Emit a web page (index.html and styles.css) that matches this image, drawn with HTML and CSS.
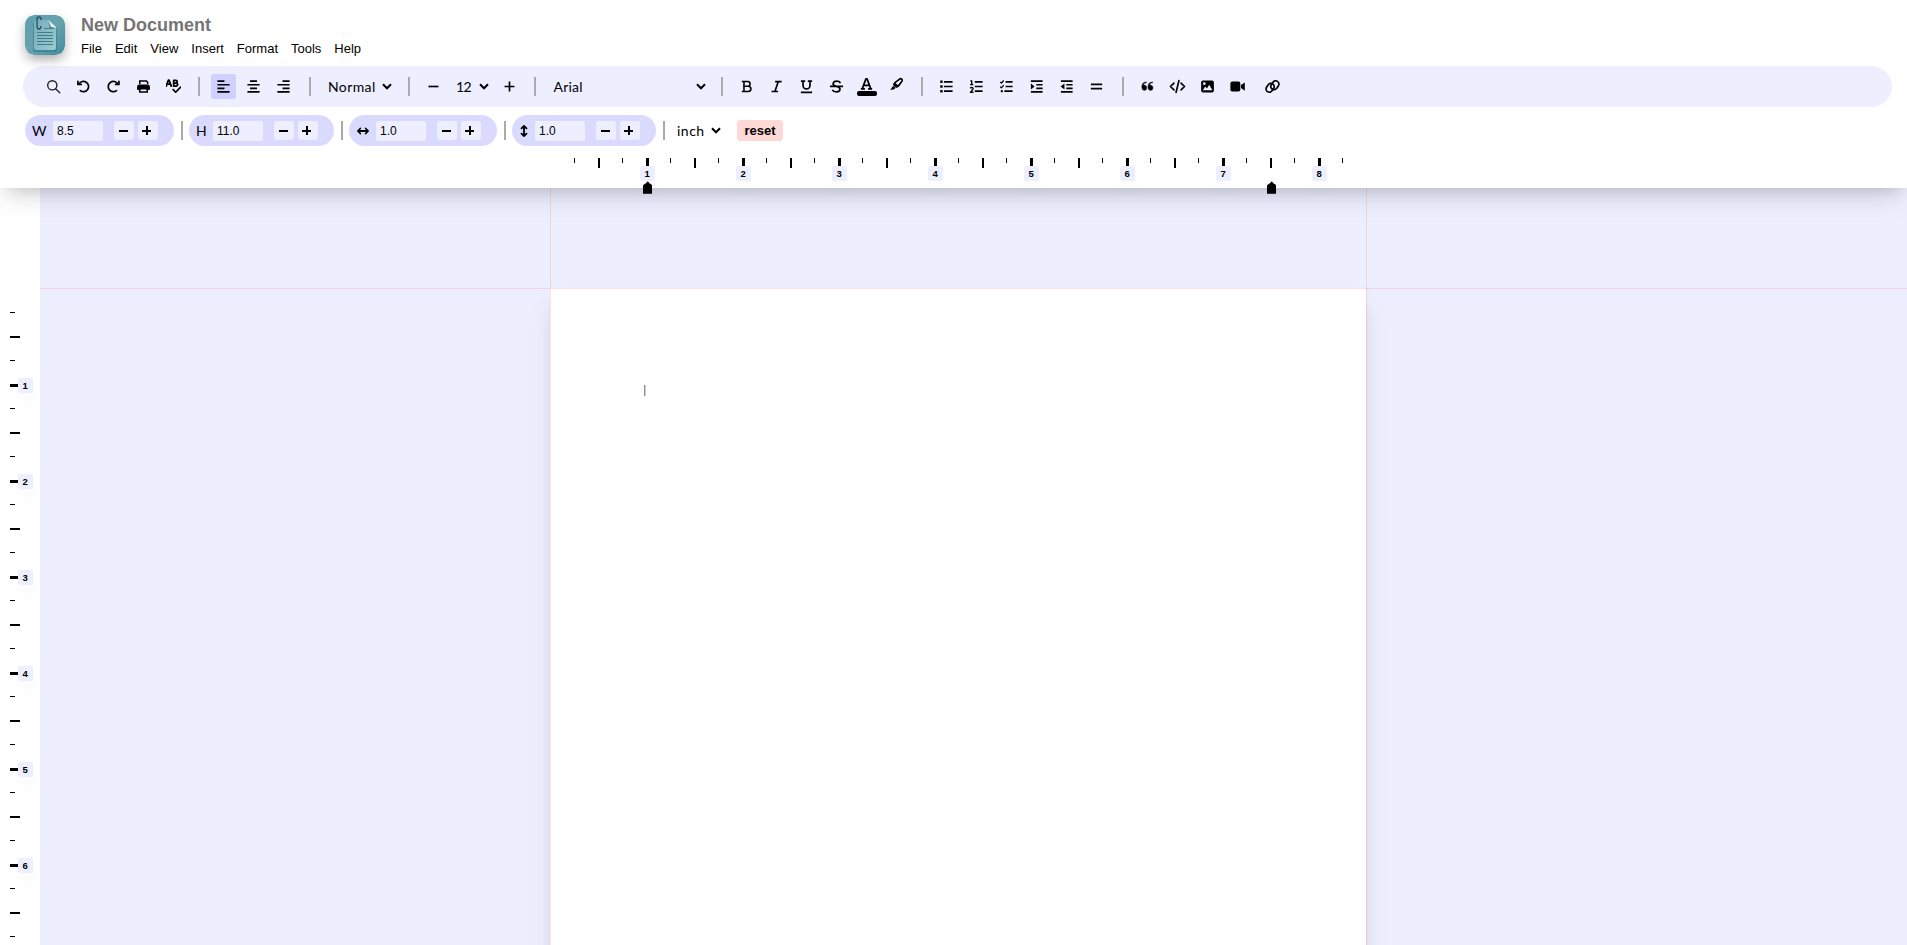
FILE: index.html
```html
<!DOCTYPE html>
<html lang="en">
<head>
<meta charset="utf-8">
<title>New Document</title>
<link rel="stylesheet" href="styles.css">
</head>
<body>
<header class="header">
  <div class="top">
    <svg class="logo" viewBox="0 0 40 40">
      <defs>
        <linearGradient id="tile" x1="0" y1="0" x2="1" y2="1"><stop offset="0" stop-color="#5f9fac"/><stop offset=".5" stop-color="#68a2ae"/><stop offset="1" stop-color="#438d9d"/></linearGradient>
        <linearGradient id="sheet" x1="0" y1="0" x2="1" y2="1"><stop offset="0" stop-color="#76adb8"/><stop offset="1" stop-color="#9acbd2"/></linearGradient>
      </defs>
      <rect width="40" height="40" rx="9" fill="url(#tile)"/>
      <path d="M10 7h15l7 7v21q0 2-2 2H10q-2 0-2-2V9q0-2 2-2z" fill="#33798a" opacity=".6"/>
      <path d="M11 5h13l7 7v21q0 2-2 2H11q-2 0-2-2V7q0-2 2-2z" fill="url(#sheet)"/>
      <path d="M23 5l8 7v1l-5-1z" fill="#e3f1f2"/><path d="M23 5l3 7 5 1-6 1z" fill="#4b8796"/>
      <path d="M19 13.500h9M12 17.500h16M12 20.500h16M12 23.500h16M12 26.500h16M12 29.500h16" stroke="#437d8d" stroke-width="1.200"/>
      <path d="M16 5V4q0-2-2-2t-2 2v7q0 3 2 3t2-3" fill="none" stroke="#294e68" stroke-width="1.300"/>
    </svg>
    <div class="heading">
      <h1 class="doc-title">New Document</h1>
      <nav class="menu"><span>File</span><span>Edit</span><span>View</span><span>Insert</span><span>Format</span><span>Tools</span><span>Help</span></nav>
    </div>
  </div>

  <div class="toolbar">
    <button class="tool"><svg viewBox="0 0 16 16" class="thin"><circle cx="6.700" cy="6.700" r="4.900"/><path d="M10.300 10.300l4.400 4.400"/></svg></button>
    <button class="tool"><svg viewBox="0 0 16 16" class="line"><path d="M3.200 5.200A5.500 5.500 0 1 1 4.600 12.400"/><path d="M2 2.400v3.400h3.600"/></svg></button>
    <button class="tool"><svg viewBox="0 0 16 16" class="line"><path d="M12.600 5.200A5.500 5.500 0 1 0 11.200 12.400"/><path d="M13.800 2.400v3.400h-3.600"/></svg></button>
    <button class="tool"><svg viewBox="0 0 16 16"><path d="M4 5.200V2.200h7.200l1.200 1.200v1.800" fill="none" stroke="#000" stroke-width="1.600"/><path d="M3.300 5.800h9.400q2 0 2 2V11.400h-2V9.600H3.300v1.800h-2V7.800q0-2 2-2z"/><path d="M1.300 8h13.400v3.400H1.300z"/><path d="M4 10.300h8v3.500H4z" fill="#edefff" stroke="#000" stroke-width="1.600"/></svg></button>
    <button class="tool"><svg viewBox="0 0 16 16" class="line"><path d="M.2 7.600l2.300-6.300h.8l2.300 6.300M1.200 5.500h3.400M8.200 1.500v6h2.500q1.800-.2 1.800-1.600T10.800 4.400H8.400h2q1.500-.1 1.500-1.500t-1.500-1.400z" stroke-width="1.900"/><path d="M7.600 11.200l2.700 2.900 5.300-5.500"/></svg></button>
    <i class="sep"></i>
    <button class="tool on"><svg viewBox="0 0 16 16" class="line flat"><path d="M1.500 2.200h7.500M1.500 6.100h13M1.500 9.900h7.500M1.500 13.800h13"/></svg></button>
    <button class="tool"><svg viewBox="0 0 16 16" class="line flat"><path d="M4.300 2.200h7.400M1.500 6.100h13M4.300 9.900h7.400M1.500 13.800h13"/></svg></button>
    <button class="tool"><svg viewBox="0 0 16 16" class="line flat"><path d="M7 2.200h7.500M1.500 6.100h13M7 9.900h7.500M1.500 13.800h13"/></svg></button>
    <i class="sep"></i>
    <div class="select style"><span>Normal</span><svg class="chev" viewBox="0 0 10 7"><path d="M1 1.300l4 4 4-4"/></svg></div>
    <i class="sep"></i>
    <button class="tool"><svg viewBox="0 0 16 16" class="line flat"><path d="M2.700 8h10.600"/></svg></button>
    <div class="select size"><span>12</span><svg class="chev" viewBox="0 0 10 7"><path d="M1 1.300l4 4 4-4"/></svg></div>
    <button class="tool"><svg viewBox="0 0 16 16" class="line flat"><path d="M2.700 8h10.600M8 2.700v10.600"/></svg></button>
    <i class="sep"></i>
    <div class="select font"><span>Arial</span><svg class="chev" viewBox="0 0 10 7"><path d="M1 1.300l4 4 4-4"/></svg></div>
    <i class="sep"></i>
    <button class="tool"><svg viewBox="0 0 16 16" class="line flat"><path d="M3 2.700h6.300q2.500.1 2.500 2.500T9.200 7.700H5h5q2.700.1 2.700 2.800T10 13.300H3M5.300 2.700v10.600" stroke-width="1.700"/></svg></button>
    <button class="tool"><svg viewBox="0 0 16 16" class="line flat"><path d="M6.500 2.700h7M2.700 13.300h7M9.900 2.700L6.300 13.300"/></svg></button>
    <button class="tool"><svg viewBox="0 0 16 16" class="line flat"><path d="M2 2.300h4.600M9.400 2.300H14M4.300 2.300v4.600a3.700 3.700 0 0 0 7.400 0V2.300M2 14.300h12"/></svg></button>
    <button class="tool"><svg viewBox="0 0 16 16" class="line flat"><path d="M12.300 4.200Q11 2.300 8 2.300T4.400 5Q4.200 7 8 7.800T11.700 11Q11.400 13.700 8 13.700T3.500 11.600M1 7.900h14"/></svg></button>
    <button class="tool color"><svg viewBox="0 0 16 16" class="line flat"><path d="M3.500 12.600L7.400 2h1.200l3.900 10.600M5 9h6M2 12.700h4.300M9.700 12.700H14" stroke-width="1.900"/></svg><b class="swatch"></b></button>
    <button class="tool pen"><svg viewBox="0 0 16 16" class="line"><path d="M5.200 8.200Q5.500 6.700 6.700 5.800L11.300 2.200Q12.600 1.300 13.600 2.300T13.800 4.600L10.300 9.200Q9.400 10.500 7.800 10.700zM6.200 7l3.500 3"/><path d="M4.500 9.200L1.300 13.900 5.600 13l1.200-1.200z" fill="#000" stroke="none"/></svg></button>
    <i class="sep"></i>
    <button class="tool"><svg viewBox="0 0 16 16" class="line flat"><path d="M5.300 3h9.200M5.300 8h9.200M5.300 13h9.200"/><path d="M1.300 3h2.600M1.300 8h2.600M1.300 13h2.600" stroke-width="2.600"/></svg></button>
    <button class="tool"><svg viewBox="0 0 16 16" class="line flat"><path d="M6.200 3h8.300M6.200 8h8.300M6.200 13h8.300"/><path d="M1.300 2h1.600v4M1.200 6h3.400M1.300 9.800q1-1 2.200-.5t.7 1.500L1.500 14.200h3.300" stroke-width="1.500"/></svg></button>
    <button class="tool"><svg viewBox="0 0 16 16" class="line flat"><path d="M7 3h7.500M7 8h7.500M5.700 13h8.800"/><path d="M1.300 3.200l1.300 1.200 2.400-2.800M1.300 8.200l1.300 1.200L5 6.600" stroke-width="1.400"/><path d="M1.900 13h2.200" stroke-width="2.200"/></svg></button>
    <button class="tool"><svg viewBox="0 0 16 16" class="line flat"><path d="M2 2.300h12.500M7.800 6.100h6.700M7.800 9.900h6.700M2 13.700h12.500"/><path d="M2 4.700v6.600L6 8z" fill="#000" stroke="none"/></svg></button>
    <button class="tool"><svg viewBox="0 0 16 16" class="line flat"><path d="M2 2.300h12.500M7.800 6.100h6.700M7.800 9.900h6.700M2 13.700h12.500"/><path d="M5.800 4.700v6.600L1.800 8z" fill="#000" stroke="none"/></svg></button>
    <button class="tool"><svg viewBox="0 0 16 16" class="line flat"><path d="M2 5.800h12M2 10.200h12"/></svg></button>
    <i class="sep"></i>
    <button class="tool"><svg viewBox="0 0 16 16"><path d="M7 3.800Q4 4 3.800 6.700h1.400q2 .2 2 2.800t-2.600 2.700Q2 12 2 8.900V7.600Q2.100 3.400 7 3.200zM13.600 3.800q-3 .2-3.200 2.900h1.400q2 .2 2 2.800t-2.600 2.700q-2.600-.2-2.600-3.300V7.600q.1-4.200 5-4.400z" stroke="#000" stroke-width=".5"/></svg></button>
    <button class="tool"><svg viewBox="0 0 18 16" class="line wide"><path d="M5.200 4.300L1.500 8l3.700 3.700M12.800 4.300L16.500 8l-3.700 3.700M10.500 1.800L7.500 14.200"/></svg></button>
    <button class="tool"><svg viewBox="0 0 16 16"><path fill-rule="evenodd" d="M3.200 1.700h9.600q2 0 2 2v8.600q0 2-2 2H3.200q-2 0-2-2V3.700q0-2 2-2zM3 12h10.200L9.800 6.200 7.400 10 5.600 8zM3.200 5a1.400 1.400 0 1 0 2.800 0 1.400 1.400 0 1 0-2.800 0z"/></svg></button>
    <button class="tool"><svg viewBox="0 0 16 16"><rect x=".4" y="2.700" width="10.600" height="10.600" rx="2"/><path d="M11.700 6.300L15.800 3.600v8.800l-4.100-2.700z"/></svg></button>
    <button class="tool link"><svg viewBox="0 0 18 16" class="line wide"><rect x="-5" y="-3.500" width="10" height="7" rx="3.500" transform="translate(6.500 9.400) rotate(-55)"/><rect x="-5" y="-3.500" width="10" height="7" rx="3.500" transform="translate(11.500 6.600) rotate(-55)"/></svg></button>
  </div>

  <div class="dims">
    <div class="pill w1"><span class="lab geo">W</span><span class="field">8.5</span><button class="step dash"></button><button class="step dash plus"></button></div>
    <i class="bar"></i>
    <div class="pill w2"><span class="lab geo">H</span><span class="field">11.0</span><button class="step dash"></button><button class="step dash plus"></button></div>
    <i class="bar"></i>
    <div class="pill w3"><span class="lab"><svg viewBox="0 0 14 14" class="line"><path d="M2 7h10M4.300 4.500L1.900 7l2.400 2.500M9.700 4.500L12.100 7 9.700 9.500"/></svg></span><span class="field">1.0</span><button class="step dash"></button><button class="step dash plus"></button></div>
    <i class="bar"></i>
    <div class="pill w4"><span class="lab"><svg viewBox="0 0 14 14" class="line"><path d="M7 2v10M4.500 4.300L7 1.900l2.500 2.400M4.500 9.700L7 12.100l2.500-2.400"/></svg></span><span class="field">1.0</span><button class="step dash"></button><button class="step dash plus"></button></div>
    <i class="bar"></i>
    <div class="select unit"><span>inch</span><svg class="chev" viewBox="0 0 10 7"><path d="M1 1.300l4 4 4-4"/></svg></div>
    <button class="reset">reset</button>
  </div>

  <div class="ruler" id="hruler"></div>
  <svg class="handle left" viewBox="0 0 10 13"><path d="M0 4Q3.500 2.500 5 0q1.500 2.500 5 4v9H0z"/></svg>
  <svg class="handle right" viewBox="0 0 10 13"><path d="M0 4Q3.500 2.500 5 0q1.500 2.500 5 4v9H0z"/></svg>
</header>

<main class="work">
  <aside class="vruler" id="vruler"></aside>
  <section class="canvas">
    <div class="page"><i class="caret"></i></div>
    <i class="guide gh"></i><i class="guide gl"></i><i class="guide gr"></i>
  </section>
</main>
<script src="ruler.js"></script>
</body>
</html>
```
FILE: styles.css
```css
* { box-sizing: border-box; }
body { margin: 0; height: 945px; overflow: hidden; background: #fff; font-family: "Liberation Sans", Arial, sans-serif; color: #000; }
button { border: 0; padding: 0; background: none; font: inherit; color: inherit; }
svg { display: block; }

.header { position: relative; z-index: 2; height: 188px; background: #fff; box-shadow: 0 13px 27px -5px rgba(0, 0, 0, .12), 0 8px 16px -8px rgba(0, 0, 0, .18); }
.top { display: flex; height: 66px; padding: 15px 0 0 25px; }
.logo { width: 40px; height: 40px; border-radius: 9px; box-shadow: 0 5px 12px -1px rgba(0, 0, 0, .35); }
.heading { padding-left: 16px; }
.doc-title { margin: 0; font-size: 18px; line-height: 20px; color: #757575; }
.menu { display: flex; gap: 13px; margin-top: 5px; font-size: 13px; line-height: 17px; }

.toolbar { display: flex; align-items: center; width: 1869px; height: 41px; margin-left: 23px; padding-left: 15px; border-radius: 21px; background: #edefff; }
.tool { position: relative; flex: none; display: flex; align-items: center; justify-content: center; width: 25px; height: 25px; margin: 0 2.500px; border-radius: 3px; }
.tool.on { background: #d0d0ff; }
.tool svg { width: 15px; height: 15px; }
.tool svg.wide { width: 17px; }
.tool.link { margin-left: 7.500px; }
.line { fill: none; stroke: #000; stroke-width: 1.800; stroke-linecap: round; stroke-linejoin: round; }
.flat { stroke-linecap: butt; }
.thin { fill: none; stroke: #222; stroke-width: 1.500; stroke-linecap: round; }
.color svg { margin-top: -5px; }
.pen svg { margin-top: -5px; }
.swatch { position: absolute; left: 3px; top: 17px; width: 20px; height: 5px; border-radius: 2px; background: #000; }
.sep { flex: none; width: 2px; height: 19px; margin: 0 8.500px 0 10px; background: #aaa; }
.select { display: flex; align-items: center; justify-content: space-between; font-family: Lato, "Liberation Sans", sans-serif; font-size: 14px; flex: none; }
.chev { width: 10px; height: 7px; fill: none; stroke: #000; stroke-width: 2; }
.style { width: 78.500px; padding: 0 5.500px 0 9px; letter-spacing: .4px; }
.size { width: 46px; padding: 0 5px 0 8px; letter-spacing: -.5px; }
.font { width: 166px; padding: 0 4.500px 0 9px; letter-spacing: .2px; }

.dims { display: flex; align-items: center; height: 31px; margin: 8px 0 0 25px; }
.pill { display: flex; align-items: center; flex: none; height: 31px; border-radius: 16px; background: #dadaff; padding-left: 7px; }
.w1 { width: 149px; } .w2 { width: 145px; } .w3 { width: 148px; } .w4 { width: 144px; }
.lab { width: 21px; display: flex; flex: none; }
.w2 .lab, .w4 .lab { width: 17px; }
.w3 .lab { width: 20px; }
.w3 .lab svg, .w4 .lab svg { width: 14px; height: 14px; }
.w4 .lab { width: 16px; margin-left: -2px; }
.w4 .field { margin-left: 2px; }
.geo { font-family: Lato, "Liberation Sans", sans-serif; font-size: 14px; }
.field { flex: none; width: 50px; height: 20px; padding-left: 4px; margin-right: 11px; border-radius: 2px; background: #edefff; font-size: 12px; line-height: 20px; }
.step { flex: none; width: 20px; height: 19px; border-radius: 3px; margin-right: 3.500px; background: #edefff; }
.dash { background-image: linear-gradient(#000, #000); background-size: 9px 2px; background-position: 5px 9px; background-repeat: no-repeat; }
.plus { background-image: linear-gradient(#000, #000), linear-gradient(#000, #000); background-size: 9px 2px, 2px 9px; background-position: 4px 9px, 8px 5px; }
.bar { flex: none; width: 2px; height: 19px; margin: 0 6.500px; background: #aaa; }
.unit { width: 45px; margin-left: 6px; padding-right: 1px; letter-spacing: .5px; }
.reset { width: 46px; height: 21px; margin-left: 15px; border-radius: 3px; background: #ffd8d8; font-size: 13px; font-weight: 700; line-height: 20px; }

.ruler { position: relative; height: 30px; margin: 12px 0 0 551px; }
.tick { position: absolute; background: #000; }
.num { position: absolute; width: 14.500px; height: 15px; border-radius: 2px; background: #edefff; box-shadow: 0 10px 20px -2px rgba(0, 0, 0, .06); font-size: 9.500px; font-weight: 700; line-height: 15px; text-align: center; }
.handle { position: absolute; top: 181px; width: 9.500px; height: 13px; }
.handle.left { left: 642.700px; }
.handle.right { left: 1266.700px; }

.work { display: flex; height: 757px; }
.vruler { position: relative; width: 40px; flex: none; }
.canvas { position: relative; flex: 1; overflow: hidden; padding: 100px 0 0 510px; background: #edefff; }
.page { width: 816px; height: 1056px; padding: 97px 0 0 94px; background: #fff; box-shadow: 0 13px 27px -5px rgba(0, 0, 50, .12), 0 8px 16px -8px rgba(0, 0, 0, .1); }
.caret { display: block; width: 2px; height: 11px; background: linear-gradient(90deg, #909090 50%, #ccc 50%); }
.guide { position: absolute; background: rgba(255, 110, 120, .22); }
.gh { left: 0; right: 0; top: 100px; height: 1px; }
.gl { left: 510px; top: 0; bottom: 0; width: 1px; }
.gr { left: 1326px; top: 0; bottom: 0; width: 1px; }
```
FILE: ruler.js
```js
// Quarter-inch ticks, 96px per inch: short, medium at the half, bold with a number at the inch.
function build(id, count, vertical, origin) {
  const host = document.getElementById(id);
  const add = (cls, along, across, length, thick, text) => {
    const e = document.createElement('span');
    e.className = cls;
    e.style[vertical ? 'top' : 'left'] = along + 'px';
    e.style[vertical ? 'left' : 'top'] = across + 'px';
    if (thick) {
      e.style[vertical ? 'width' : 'height'] = length + 'px';
      e.style[vertical ? 'height' : 'width'] = thick + 'px';
    }
    if (text) e.textContent = text;
    host.appendChild(e);
  };
  const base = vertical ? 10 : 0;
  for (let i = 1; i <= count; i++) {
    const p = origin + i * 24;
    if (i % 4 === 0) {
      add('tick', p - 1, base, 8, 3);
      add('num', p - 7, base + 8, 0, 0, String(i / 4));
    } else if (i % 2 === 0) {
      add('tick', p - 1, base, 10, 2);
    } else {
      add('tick', p - 1, base, 5, 1);
    }
  }
}
build('hruler', 33, false, 0);
build('vruler', 27, true, 101);
```
